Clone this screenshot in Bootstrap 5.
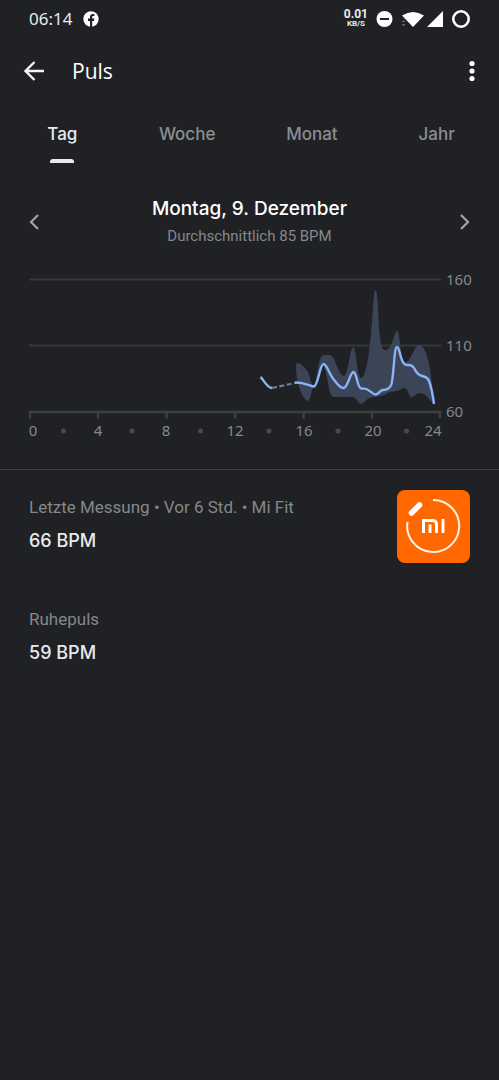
<!DOCTYPE html>
<html lang="de" data-bs-theme="dark">
<head>
<meta charset="utf-8">
<meta name="viewport" content="width=device-width, initial-scale=1">
<title>Puls</title>
<link href="https://cdn.jsdelivr.net/npm/bootstrap@5.3.0/dist/css/bootstrap.min.css" rel="stylesheet">
<style>
  body { background: #202124; color: #e8eaed; font-family: "Noto Sans", sans-serif; }
  svg { display: block; }
  .gutter { padding-left: 29px; padding-right: 29px; }
  .muted { color: #85888c; }
  .status { height: 37px; font-size: 17px; line-height: 20px; }
  .speed { font: 700 12px/11px Roboto, sans-serif; text-align: center; }
  .speed span { display: block; font-size: 8px; line-height: 8px; }
  .appbar { height: 68px; padding: 0 20px; }
  .appbar h1 { font: 400 21px/28px "Open Sans", sans-serif; margin: 0 0 0 24px; }
  .icon-btn { padding: 0; border: 0; color: #e8eaed; }
  .tabs { height: 58px; border-bottom: 1px solid #1c1d20; }
  .tabs .nav-link { height: 58px; padding: 18px 0 0; color: #8b8e92; font: 500 17px/22px Inter, sans-serif; position: relative; }
  .tabs .nav-link.active { color: #e8eaed; }
  .tabs .nav-link.active::after { content: ""; position: absolute; left: 50%; bottom: 0; width: 24px; height: 4px; transform: translateX(-50%); border-radius: 3px 3px 0 0; background: #e8eaed; }
  .period { padding-top: 32px; padding-bottom: 24px; }
  .period h2 { font: 500 19px/28px Inter, sans-serif; margin: 0; }
  .period p { font: 400 15px/26px Roboto, sans-serif; margin: 0; }
  .chart { padding-bottom: 24px; border-bottom: 1px solid #3c4043; }
  .chart svg { overflow: visible; }
  .chart text { font: 400 15px "Noto Sans", sans-serif; fill: #85888c; }
  .reading { min-height: 112px; padding-top: 20px; }
  .reading dt { font: 400 17px/34px Roboto, sans-serif; }
  .reading dd { font: 500 18px/34px Inter, sans-serif; margin: 0; }
</style>
</head>
<body>
<div class="status d-flex align-items-center justify-content-between gutter">
  <div class="d-flex align-items-center">
    <span>06:14</span>
    <svg class="ms-2" width="20" height="18" viewBox="-2 0 20 18" aria-hidden="true"><circle cx="9" cy="9" r="7.7" fill="#fff"/><path d="M8 17v-6H6V8.600h2V7c0-2 1.100-3.100 3-3.100h1.400v2h-1.200c-.7 0-1 .4-1 1v1.700h2.200l-.4 2.400h-1.800v6" fill="#202124"/></svg>
  </div>
  <div class="d-flex align-items-center">
    <div class="speed me-2">0.01<span>KB/S</span></div>
    <svg width="94" height="22" viewBox="2 0 94 22" fill="#fff" aria-hidden="true">
      <circle cx="10.500" cy="11" r="8"/><path d="M6 10h9v2H6z" fill="#202124"/>
      <path d="M28 7.500Q39 .5 50 7.500L39 19z"/><path d="M28 14l1.500-2 1.500 2zM28 16l1.500 2 1.500-2z" opacity=".4"/>
      <path d="M69 3v16H53z"/>
      <circle cx="87" cy="11" r="7.700" fill="none" stroke="#fff" stroke-width="2.600"/>
    </svg>
  </div>
</div>
<header class="appbar d-flex align-items-center">
  <button class="btn icon-btn" type="button" aria-label="Zurück"><svg width="28" height="28" viewBox="0 0 28 28" fill="none" stroke="#f1f3f4" stroke-width="2.400"><path d="M24 14H6M14.500 5L5.500 14l9 9"/></svg></button>
  <h1>Puls</h1>
  <button class="btn icon-btn ms-auto" type="button" aria-label="Mehr"><svg width="14" height="28" viewBox="0 0 14 28" fill="#fff"><circle cx="7" cy="6.500" r="2.600"/><circle cx="7" cy="14" r="2.600"/><circle cx="7" cy="21.500" r="2.600"/></svg></button>
</header>
<nav class="tabs nav nav-justified flex-nowrap">
  <a class="nav-link active" aria-current="page" href="#tag">Tag</a>
  <a class="nav-link" href="#woche">Woche</a>
  <a class="nav-link" href="#monat">Monat</a>
  <a class="nav-link" href="#jahr">Jahr</a>
</nav>
<main>
  <section class="period d-flex align-items-center justify-content-between gutter" id="tag">
    <button class="btn icon-btn" type="button" aria-label="Vorheriger Tag"><svg width="10" height="20" viewBox="0 0 10 20" fill="none" stroke="#a0a3a7" stroke-width="2.200"><path d="M9 3L2 10l7 7"/></svg></button>
    <div class="text-center">
      <h2>Montag, 9. Dezember</h2>
      <p class="muted">Durchschnittlich 85 BPM</p>
    </div>
    <button class="btn icon-btn" type="button" aria-label="Nächster Tag"><svg width="10" height="20" viewBox="0 0 10 20" fill="none" stroke="#a0a3a7" stroke-width="2.200"><path d="M1 3l7 7-7 7"/></svg></button>
  </section>
  <section class="chart gutter">
    <svg class="w-100" viewBox="29 273 441 172" role="img" aria-label="Pulsverlauf">
      <path d="M29 279.500H441M29 345.500H441" stroke="#35383b" stroke-width="2"/>
      <g fill="#3b4557">
        <path d="M296 365C297 359 306 368 308.500 373C310 378 311 383 313 387C311 392 310 401 308 401C303 399 296 386 296 365z"/>
        <path d="M314 386C318 378 318 355 324 355C328 355 331 353 334 359C337 366 340 376 344 376C348 376 350 347 353.500 347C356 347 357 378 361 378C366 378 369 354 371 334C373 312 373.500 290 375.500 290C378 290 378 318 380 337C381 348 383 350 385 350C393 350 394 331 397 331C400 331 400 361 406 362C411 362 414 345 419 345C428 346 431 372 434 403C431 403 426 392 419 393C415 394 414 398 411 397C408 395 408 387 403 388C397 393 391 390 386 394C382 397 375 396 370 398C366 399 364 404 361 404C357 403 357 397 352 397H334C328 397 329 377 323 364C319 365 319 387 314 387z"/>
      </g>
      <path d="M29 412H441M30 411V418.500M98 412V418.500M166.500 412V418.500M235 412V418.500M303.500 412V418.500M372 412V418.500M440 411V418.500" fill="none" stroke="#3c4043" stroke-width="2.500"/>
      <path d="M272 388L297 382.500" stroke="#6f8197" stroke-width="2.200" stroke-dasharray="5 2.500"/>
      <path d="M260.500 377C264 380 267 388 272 388M295 382.500C304 382 309 386 314 386.500C318 386 320 364 323.500 364C327 364 329 375 335 381C338 385 340 388 343.500 388C348 388 350 372 353.500 372C357 373 357 387 361 388.500C364 389 366 388 368 390C372 392 373 394.500 375.500 394.500C379 394 380 390 383 390C387 390 390 389 391.500 384C394 374 394 347 397 347C400 347 400 362 405 364.500C408 366 411 363 414 368C417 373 418 375 422 376C425 377 427 376 429 381C432 389 433 396 434 404" fill="none" stroke="#8ab4f8" stroke-width="2.400" stroke-linejoin="round"/>
      <g fill="#484b4e"><circle cx="63.500" cy="431" r="2.500"/><circle cx="132" cy="431" r="2.500"/><circle cx="200.500" cy="431" r="2.500"/><circle cx="269" cy="431" r="2.500"/><circle cx="338" cy="431" r="2.500"/><circle cx="406.500" cy="431" r="2.500"/></g>
      <g text-anchor="middle"><text x="33" y="436">0</text><text x="98" y="436">4</text><text x="166" y="436">8</text><text x="235" y="436">12</text><text x="304" y="436">16</text><text x="373" y="436">20</text><text x="433" y="436">24</text></g>
      <text x="446" y="285">160</text><text x="446" y="351">110</text><text x="446" y="417">60</text>
    </svg>
  </section>
  <section class="reading gutter d-flex align-items-start justify-content-between">
    <dl class="mb-0"><dt class="muted">Letzte Messung • Vor 6 Std. • Mi Fit</dt><dd>66 BPM</dd></dl>
    <svg class="flex-shrink-0" width="73" height="73" viewBox="0 0 73 73" role="img" aria-label="Mi Fit">
      <rect width="73" height="73" rx="8" fill="#ff6700"/>
      <path d="M36 10A26 26 0 1 1 10.500 32" fill="none" stroke="#fff1e6" stroke-width="2"/>
      <path d="M14.500 23L22.500 15" stroke="#fff" stroke-width="5.500" stroke-linecap="round"/>
      <path d="M26.500 43V30.500H35.500Q39.500 30.500 39.500 34.500V43M33 34.500V43M46 29V43" fill="none" stroke="#fff" stroke-width="3"/>
    </svg>
  </section>
  <section class="reading gutter">
    <dl class="mb-0"><dt class="muted">Ruhepuls</dt><dd>59 BPM</dd></dl>
  </section>
</main>
<script src="https://cdn.jsdelivr.net/npm/bootstrap@5.3.0/dist/js/bootstrap.bundle.min.js"></script>
</body>
</html>
